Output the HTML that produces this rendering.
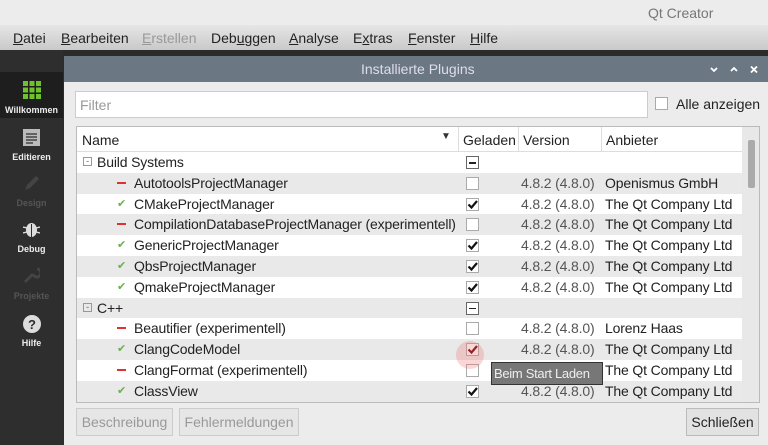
<!DOCTYPE html>
<html><head><meta charset="utf-8"><style>
*{margin:0;padding:0;box-sizing:border-box}
body{width:768px;height:445px;overflow:hidden;font-family:"Liberation Sans",sans-serif;background:#2b2b2b;position:relative;font-size:14px;color:#222}
.abs{position:absolute}
#tb{left:0;top:0;width:768px;height:25px;background:#ececec}
#tb span{position:absolute;left:648px;top:5px;color:#777;font-size:14px}
#mb{left:0;top:25px;width:768px;height:25px;background:linear-gradient(#e6e6e6,#c9c9c9)}
#mb span{position:absolute;top:5px;font-size:14px;color:#222}
#side{left:0;top:50px;width:63px;height:395px;background:#2e2e2e}
.si{position:absolute;left:0;width:63px;text-align:center;font-size:9px;font-weight:bold;color:#eee}
#dlg{left:64px;top:56px;width:704px;height:389px;background:#ececec}
#dt{left:64px;top:56px;width:704px;height:26px;background:#6b7783;color:#dde;font-size:14px}
.row{position:absolute;left:77px;width:665px;height:21px;font-size:14px;letter-spacing:-0.15px}
.row span{position:absolute;top:2px;white-space:nowrap}
.cb{position:absolute;left:389px;top:4px;width:13px;height:13px;border:1px solid #aaa;background:#fff}
.btn{position:absolute;top:408px;height:28px;border:1px solid #ccc;background:#e6e6e6;font-size:14px;text-align:center;line-height:26px}
</style></head><body>
<div id="tb" class="abs"><span>Qt Creator</span></div>
<div id="mb" class="abs">
<span style="left:13px"><u>D</u>atei</span>
<span style="left:61px"><u>B</u>earbeiten</span>
<span style="left:142px;color:#999"><u>E</u>rstellen</span>
<span style="left:211px">Deb<u>u</u>ggen</span>
<span style="left:289px"><u>A</u>nalyse</span>
<span style="left:353px">E<u>x</u>tras</span>
<span style="left:408px"><u>F</u>enster</span>
<span style="left:470px"><u>H</u>ilfe</span>
</div>
<div id="side" class="abs">
<div class="abs" style="left:0;top:22px;width:63px;height:46px;background:#1e1e1e"></div>
<svg class="abs" style="left:23px;top:31px" width="18" height="18"><g fill="#6fc22c"><rect x="0" y="0" width="5" height="5"/><rect x="6.5" y="0" width="5" height="5"/><rect x="13" y="0" width="5" height="5"/><rect x="0" y="6.5" width="5" height="5"/><rect x="6.5" y="6.5" width="5" height="5"/><rect x="13" y="6.5" width="5" height="5"/><rect x="0" y="13" width="5" height="5"/><rect x="6.5" y="13" width="5" height="5"/><rect x="13" y="13" width="5" height="5"/></g></svg>
<div class="si" style="top:55px">Willkommen</div>
<svg class="abs" style="left:23px;top:79px" width="17" height="17"><rect width="17" height="17" fill="#bbb"/><g stroke="#333" stroke-width="1.3"><line x1="3" y1="5" x2="14" y2="5"/><line x1="3" y1="8" x2="14" y2="8"/><line x1="3" y1="11" x2="14" y2="11"/><line x1="3" y1="14" x2="10" y2="14"/></g></svg>
<div class="si" style="top:102px">Editieren</div>
<svg class="abs" style="left:23px;top:125px" width="17" height="17"><path d="M2 15 L4 10 L13 1 L16 4 L7 13 Z" fill="#444"/></svg>
<div class="si" style="top:148px;color:#555">Design</div>
<svg class="abs" style="left:23px;top:170px" width="17" height="18"><ellipse cx="8.5" cy="10" rx="5.5" ry="7" fill="#ddd"/><line x1="8.5" y1="4" x2="8.5" y2="17" stroke="#2e2e2e"/><g stroke="#ddd" stroke-width="1.4"><line x1="0" y1="7" x2="4" y2="8"/><line x1="17" y1="7" x2="13" y2="8"/><line x1="0" y1="13" x2="4" y2="12"/><line x1="17" y1="13" x2="13" y2="12"/></g></svg>
<div class="si" style="top:194px">Debug</div>
<svg class="abs" style="left:23px;top:216px" width="17" height="17"><path d="M2 16 L10 8 M10 8 A4 4 0 1 0 14 3" stroke="#444" stroke-width="3" fill="none"/></svg>
<div class="si" style="top:241px;color:#555">Projekte</div>
<svg class="abs" style="left:23px;top:265px" width="18" height="18"><circle cx="9" cy="9" r="9" fill="#ddd"/><text x="9" y="14" font-size="13" font-weight="bold" text-anchor="middle" fill="#2e2e2e" font-family="Liberation Sans">?</text></svg>
<div class="si" style="top:288px">Hilfe</div>
</div>
<div id="dlg" class="abs"></div>
<div id="dt" class="abs"><span class="abs" style="left:297px;top:5px">Installierte Plugins</span>
<svg class="abs" style="left:646px;top:10px" width="60" height="8"><g stroke="#fff" stroke-width="1.8" fill="none"><path d="M1 2 L4 5 L7 2"/><path d="M21 5 L24 2 L27 5"/><path d="M41 0.5 L47 6.5 M47 0.5 L41 6.5"/></g></svg></div>
<div class="abs" style="left:75px;top:91px;width:573px;height:27px;background:#fff;border:1px solid #ccc"><span class="abs" style="left:4px;top:5px;color:#999">Filter</span></div>
<div class="abs" style="left:655px;top:97px;width:13px;height:13px;border:1px solid #aaa;background:#fff"></div>
<span class="abs" style="left:676px;top:96px;font-size:14px">Alle anzeigen</span>
<div class="abs" style="left:76px;top:126px;width:684px;height:277px;background:#fff;border:1px solid #bbb"></div>
<div class="abs" style="left:77px;top:127px;width:665px;height:25px;background:#fff;border-bottom:1px solid #ddd;font-size:14px">
<span class="abs" style="left:5px;top:5px">Name</span>
<span class="abs" style="left:364px;top:4px;font-size:10px;color:#333">▼</span>
<div class="abs" style="left:381px;top:0;height:25px;border-left:1px solid #ddd"></div>
<span class="abs" style="left:386px;top:5px">Geladen</span>
<div class="abs" style="left:441px;top:0;height:25px;border-left:1px solid #ddd"></div>
<span class="abs" style="left:446px;top:5px">Version</span>
<div class="abs" style="left:524px;top:0;height:25px;border-left:1px solid #ddd"></div>
<span class="abs" style="left:529px;top:5px">Anbieter</span>
</div>
<div class="abs" style="left:742px;top:127px;width:17px;height:275px;background:#e8e8e8"></div>
<div class="abs" style="left:748px;top:140px;width:7px;height:48px;background:#aaa;border-radius:2px"></div>
<div id="rows"></div>
<script>
var R=[["g","Build Systems"],["r","AutotoolsProjectManager",0,"Openismus GmbH"],["c","CMakeProjectManager",1],["r","CompilationDatabaseProjectManager (experimentell)",0],["c","GenericProjectManager",1],["c","QbsProjectManager",1],["c","QmakeProjectManager",1],["g","C++"],["r","Beautifier (experimentell)",0,"Lorenz Haas"],["c","ClangCodeModel",1],["r","ClangFormat (experimentell)",0],["c","ClassView",1]];
var h="";
R.forEach(function(r,i){var y=152+i*20.8;var bg=i%2?"#e9e9e9":"#fff";
h+='<div class="row" style="top:'+y+'px;background:'+bg+'">';
if(r[0]=="g"){h+='<span style="left:6px;top:5px;width:9px;height:9px;border:1px solid #999;font-size:9px;line-height:6px;text-align:center;color:#666">-</span><span style="left:20px">'+r[1]+'</span><div class="cb" style="border-color:#666"><div style="margin:5px 2px;height:1.5px;background:#222"></div></div>';}
else{h+=(r[0]=="r"?'<span style="left:40px;top:9px;width:9px;height:2px;background:#e03030"></span>':'<span style="left:40px;top:3px;font-size:11px;color:#6ab04c">✔</span>')+'<span style="left:57px">'+r[1]+'</span>';
h+='<div class="cb">'+(r[2]?'<svg width="11" height="11" style="position:absolute;left:0;top:0"><path d="M1.5 5.5 L4.5 8.5 L10 2" stroke="'+(i==9?'#6a0000':'#111')+'" stroke-width="2.2" fill="none"/></svg>':'')+'</div>';
h+='<span style="left:444px;color:#555">4.8.2 (4.8.0)</span><span style="left:528px">'+(r[3]||"The Qt Company Ltd")+'</span>';}
h+='</div>';});
document.getElementById("rows").innerHTML=h;
</script>
<div class="abs" style="left:456px;top:341px;width:28px;height:28px;border-radius:14px;background:rgba(240,120,120,0.3)"></div>
<div class="abs" style="left:491px;top:362px;width:112px;height:23px;background:#777;border:1px solid #333;color:#eee;font-size:13px;padding:3px 2px;white-space:nowrap;letter-spacing:-0.3px;overflow:hidden">Beim Start Laden</div>
<div class="btn" style="left:76px;width:97px;color:#999">Beschreibung</div>
<div class="btn" style="left:179px;width:120px;color:#999">Fehlermeldungen</div>
<div class="btn" style="left:686px;width:73px;background:#e2e2e2;border-color:#bbb">Schließen</div>
</body></html>
